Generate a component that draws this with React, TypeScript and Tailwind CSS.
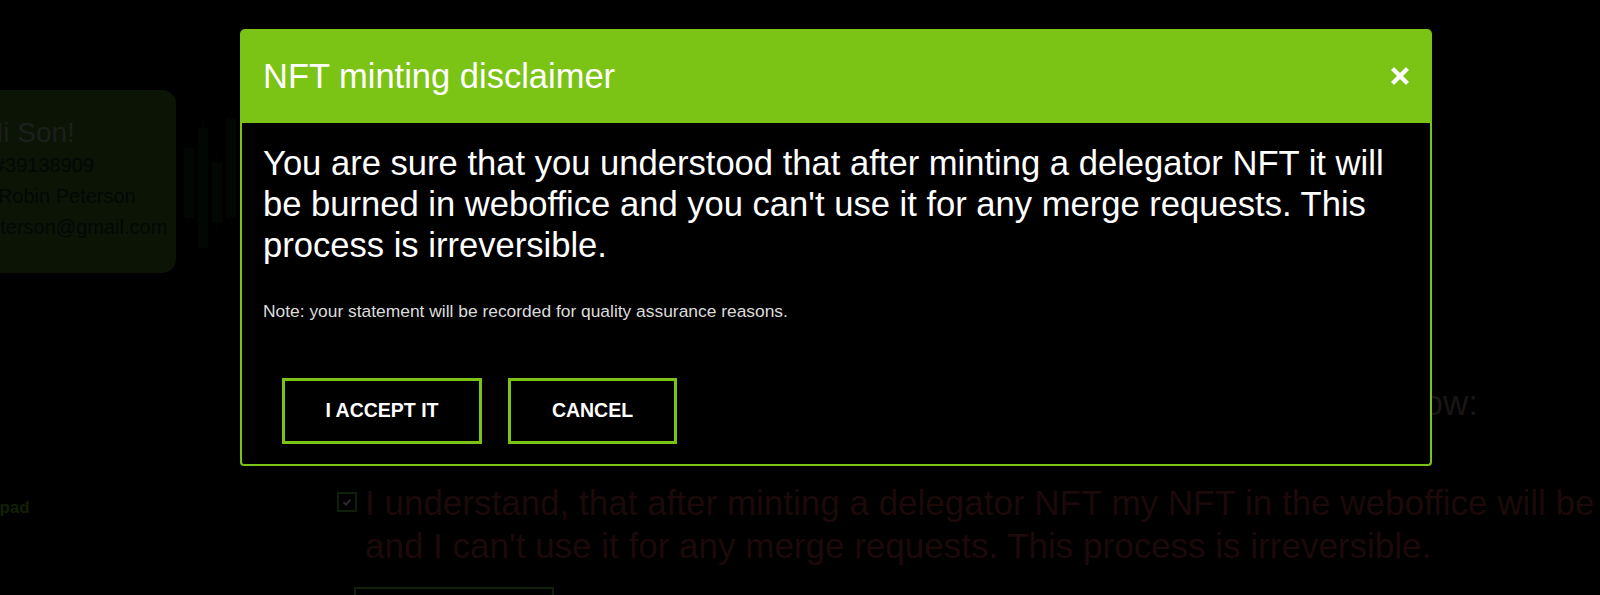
import React from "react";

function CloseIcon() {
  return (
    <svg width="18" height="18" viewBox="0 0 18 18" aria-hidden="true">
      <path d="M3 3 L15 15 M15 3 L3 15" stroke="#ffffff" strokeWidth="4.2" strokeLinecap="square" />
    </svg>
  );
}

function FaintChart() {
  const bars = [
    { x: 4, y: 40, h: 70 },
    { x: 18, y: 20, h: 120 },
    { x: 32, y: 55, h: 60 },
    { x: 46, y: 10, h: 100 },
  ];
  return (
    <svg width="60" height="140" viewBox="0 0 60 140" aria-hidden="true">
      {bars.map((b, i) => (
        <g key={i}>
          <line x1={b.x + 5} y1={b.y - 8} x2={b.x + 5} y2={b.y + b.h + 8} stroke="#020602" strokeWidth="1" />
          <rect x={b.x} y={b.y} width="10" height={b.h} fill="#030703" />
        </g>
      ))}
    </svg>
  );
}

export default function App() {
  return (
    <div className="relative w-[1600px] h-[595px] overflow-hidden bg-black font-['Liberation_Sans',Arial,sans-serif]">
      {/* Background page (dimmed) */}
      <div className="flex flex-col">
        <div className="h-[23px]" />
        <div className="flex">
          {/* Sidebar */}
          <div className="flex w-[337px] shrink-0 flex-col pt-[67px]">
            <div className="flex items-start">
              <div className="ml-[-40px] flex h-[183px] w-[216px] shrink-0 flex-col rounded-[14px] bg-[#0b1405] pl-[23px] pt-[30px]">
                <div className="whitespace-nowrap text-[28px] leading-[26px] text-[#1d1f1c]">Hi Son!</div>
                <div className="mt-[4px] whitespace-nowrap text-[20px] leading-[31px] text-[#050705]">
                  <div className="ml-[11px]">#39138909</div>
                  <div className="ml-[-14px]">Mr Robin Peterson</div>
                  <div className="ml-[-55px]">robin.peterson@gmail.com</div>
                </div>
              </div>
              <div className="ml-[4px] mt-[18px]">
                <FaintChart />
              </div>
            </div>
            <div className="ml-[-61px] mt-[225px] whitespace-nowrap text-[17px] font-bold leading-[20px] text-[#112004]">
              Launchpad
            </div>
          </div>
          {/* Main content */}
          <div className="flex flex-col pt-[358px]">
            <div className="w-[1141px] whitespace-nowrap text-right text-[35px] leading-[43px] text-[#1a1516]">
              Please confirm the statement below:
            </div>
            <div className="mt-[57px] flex items-start gap-[8px]">
              <div className="mt-[11px] flex h-[20px] w-[20px] shrink-0 items-center justify-center border-2 border-[#0f1f08]">
                <svg width="12" height="12" viewBox="0 0 12 12" aria-hidden="true">
                  <path d="M2.5 6.2 L5 8.6 L9.5 3.6" stroke="#2a2a2a" strokeWidth="2" fill="none" />
                </svg>
              </div>
              <div className="whitespace-nowrap text-[35px] leading-[43px] text-[#1c090a]">
                <div>I understand, that after minting a delegator NFT my NFT in the weboffice will be burned</div>
                <div>and I can't use it for any merge requests. This process is irreversible.</div>
              </div>
            </div>
            <div className="ml-[17px] mt-[20px] h-[60px] w-[200px] border-2 border-[#0f1f08]" />
          </div>
        </div>
      </div>

      {/* Modal */}
      <div className="absolute left-[240px] top-[29px] w-[1192px]">
        <div className="flex h-[94px] items-center justify-between rounded-t-[5px] bg-[#7bc314] px-[23px]">
          <h2 className="text-[34.5px] font-normal leading-[40px] text-white">NFT minting disclaimer</h2>
          <button type="button" className="flex h-[18px] w-[18px] items-center justify-center">
            <CloseIcon />
          </button>
        </div>
        <div className="rounded-b-[4px] border-2 border-t-0 border-[#7bc314] bg-black pb-[20px] pl-[21px] pt-[20px]">
          <p className="max-w-[1150px] text-[34.6px] leading-[41px] text-white">
            You are sure that you understood that after minting a delegator NFT it will be burned in weboffice and you can't use it for any merge requests. This process is irreversible.
          </p>
          <p className="mt-[35px] text-[17.4px] leading-[20px] text-[#dcdcdc]">
            Note: your statement will be recorded for quality assurance reasons.
          </p>
          <div className="ml-[19px] mt-[57px] flex gap-[26px]">
            <button type="button" className="flex h-[66px] w-[200px] items-center justify-center border-[3px] border-[#7bc314] bg-black text-[19.5px] font-bold text-white">
              I ACCEPT IT
            </button>
            <button type="button" className="flex h-[66px] w-[169px] items-center justify-center border-[3px] border-[#7bc314] bg-black text-[19.5px] font-bold text-white">
              CANCEL
            </button>
          </div>
        </div>
      </div>
    </div>
  );
}
